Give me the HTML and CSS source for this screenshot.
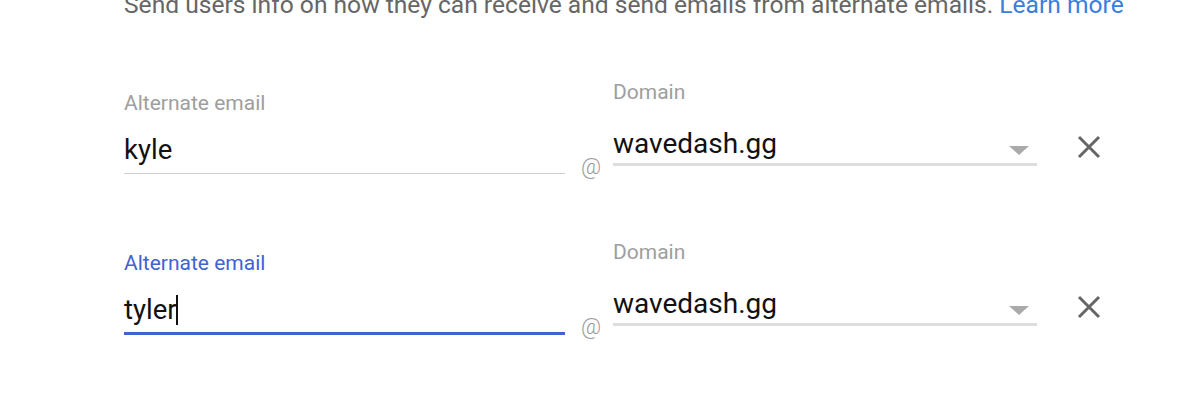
FILE: index.html
```html
<!DOCTYPE html>
<html lang="en">

<head>
    <meta charset="UTF-8" />
    <meta name="viewport" content="width=device-width, initial-scale=1.0" />
    <link rel="stylesheet" href="styles.css">
    <title>Alternate emails</title>
</head>

<body>
    <p class="intro">Send users info on how they can receive and send emails from alternate emails. <a href="#">Learn more</a></p>

    <div class="rows">
        <div class="row">
            <div class="field email">
                <p class="label">Alternate email</p>
                <div class="value">kyle</div>
            </div>
            <div class="at">@</div>
            <div class="field domain">
                <p class="label">Domain</p>
                <div class="value select">
                    <span>wavedash.gg</span>
                    <span class="arrow"></span>
                </div>
            </div>
            <div class="remove">
                <svg width="24" height="24" viewBox="0 0 24 24">
                    <path d="M2 2 L22 22 M22 2 L2 22" stroke="#666" stroke-width="3" fill="none" />
                </svg>
            </div>
        </div>

        <div class="row">
            <div class="field email focused">
                <p class="label">Alternate email</p>
                <div class="value">tyler<span class="caret"></span></div>
            </div>
            <div class="at">@</div>
            <div class="field domain">
                <p class="label">Domain</p>
                <div class="value select">
                    <span>wavedash.gg</span>
                    <span class="arrow"></span>
                </div>
            </div>
            <div class="remove">
                <svg width="24" height="24" viewBox="0 0 24 24">
                    <path d="M2 2 L22 22 M22 2 L2 22" stroke="#666" stroke-width="3" fill="none" />
                </svg>
            </div>
        </div>
    </div>
</body>

</html>
```

FILE: styles.css
```css
* {
    margin: 0;
    padding: 0;
    box-sizing: border-box;
}

body {
    font-family: 'Roboto', sans-serif;
    background: #fff;
    overflow: hidden;
}

.intro {
    margin-top: -9px;
    padding-left: 124px;
    font-size: 24.6px;
    line-height: 28px;
    color: #666;
    white-space: nowrap;
}

.intro a {
    color: #3b7ddd;
    text-decoration: none;
}

.rows {
    margin-top: 61px;
    padding-left: 124px;
}

.row {
    display: flex;
    align-items: flex-start;
    height: 160px;
}

.label {
    font-size: 21px;
    line-height: 24px;
    color: #9e9e9e;
}

.value {
    font-size: 27.5px;
    line-height: 32px;
    color: #111;
}

.email {
    width: 441px;
    padding-top: 11px;
}

.email .value {
    margin-top: 19px;
    padding-bottom: 7px;
    border-bottom: 1px solid #d0d0d0;
}

.email.focused .value {
    padding-bottom: 6px;
    border-bottom: 3px solid #4262d2;
}

.email.focused .label {
    color: #4262d2;
}

.caret {
    display: inline-block;
    width: 2px;
    height: 30px;
    background: #111;
    vertical-align: -6px;
    margin-left: -1px;
}

.at {
    margin-left: 16px;
    padding-top: 75px;
    width: 32px;
    font-size: 22px;
    line-height: 24px;
    font-weight: 300;
    color: #999;
}

.domain {
    width: 424px;
}

.select {
    display: flex;
    align-items: flex-start;
    margin-top: 24px;
    padding-bottom: 3px;
    border-bottom: 3px solid #ddd;
}

.select span:first-child {
    font-size: 28px;
}

.arrow {
    margin-left: auto;
    margin-right: 8px;
    margin-top: 18px;
    border-left: 10px solid transparent;
    border-right: 10px solid transparent;
    border-top: 9px solid #aaa;
}

.remove {
    margin-left: 40px;
    padding-top: 55px;
    line-height: 0;
}
```
